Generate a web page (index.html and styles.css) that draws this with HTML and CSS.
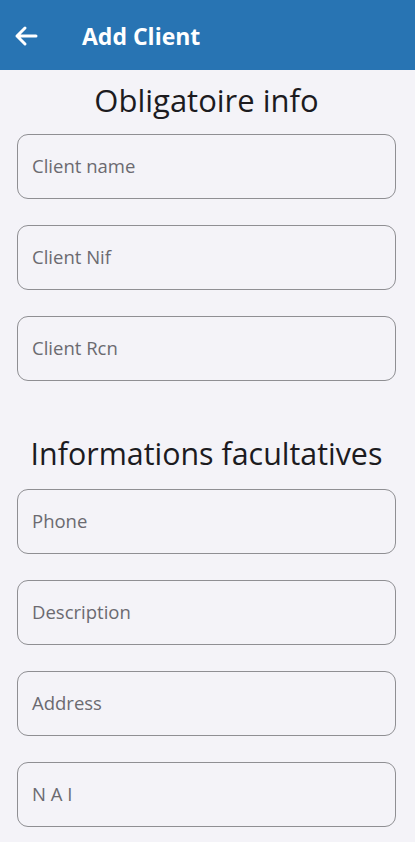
FILE: index.html
```html
<!DOCTYPE html>
<html>
<head>
<meta charset="utf-8">
<link rel="stylesheet" href="styles.css">
</head>
<body>
<header class="appbar">
  <svg class="back" viewBox="0 0 26 22" width="26" height="22"><path d="M4 11H23M12 3L4 11L12 19" fill="none" stroke="#fff" stroke-width="3" stroke-linecap="round" stroke-linejoin="round"/></svg>
  <h1 class="title">Add Client</h1>
</header>
<main class="content">
  <h2 class="section-title first">Obligatoire info</h2>
  <div class="fields">
    <div class="field"><span class="ph">Client name</span></div>
    <div class="field"><span class="ph">Client Nif</span></div>
    <div class="field"><span class="ph">Client Rcn</span></div>
  </div>
  <h2 class="section-title second">Informations facultatives</h2>
  <div class="fields">
    <div class="field"><span class="ph">Phone</span></div>
    <div class="field"><span class="ph">Description</span></div>
    <div class="field"><span class="ph">Address</span></div>
    <div class="field"><span class="ph">N A I</span></div>
  </div>
</main>
</body>
</html>
```
FILE: styles.css
```css
html, body {
  margin: 0;
  padding: 0;
  background: #f4f3f8;
  font-family: "Open Sans", "Noto Sans", sans-serif;
}
body {
  width: 415px;
  height: 842px;
  overflow: hidden;
}
.appbar {
  height: 70px;
  background: #2874b3;
  display: flex;
  align-items: center;
  padding-left: 13px;
  padding-top: 2px;
  box-sizing: border-box;
}
.back {
  display: block;
  flex: none;
}
.title {
  margin: 0 0 0 43px;
  color: #fff;
  font-size: 23px;
  font-weight: 700;
}
.content {
  padding: 0 19px 0 17px;
}
.section-title {
  margin: 0;
  text-align: center;
  font-weight: 400;
  color: #1c1b1f;
}
.section-title.first {
  font-size: 31px;
  height: 64px;
  line-height: 61px;
}
.section-title.second {
  font-size: 30.4px;
  margin-top: 42px;
  height: 66px;
  line-height: 62px;
}
.fields {
  display: flex;
  flex-direction: column;
  gap: 26px;
}
.field {
  height: 65px;
  border: 1px solid #8f8f93;
  border-radius: 11px;
  box-sizing: border-box;
  display: flex;
  align-items: center;
  padding-left: 14px;
  padding-bottom: 2px;
}
.ph {
  color: #6b6a70;
  font-size: 18.5px;
}
```
